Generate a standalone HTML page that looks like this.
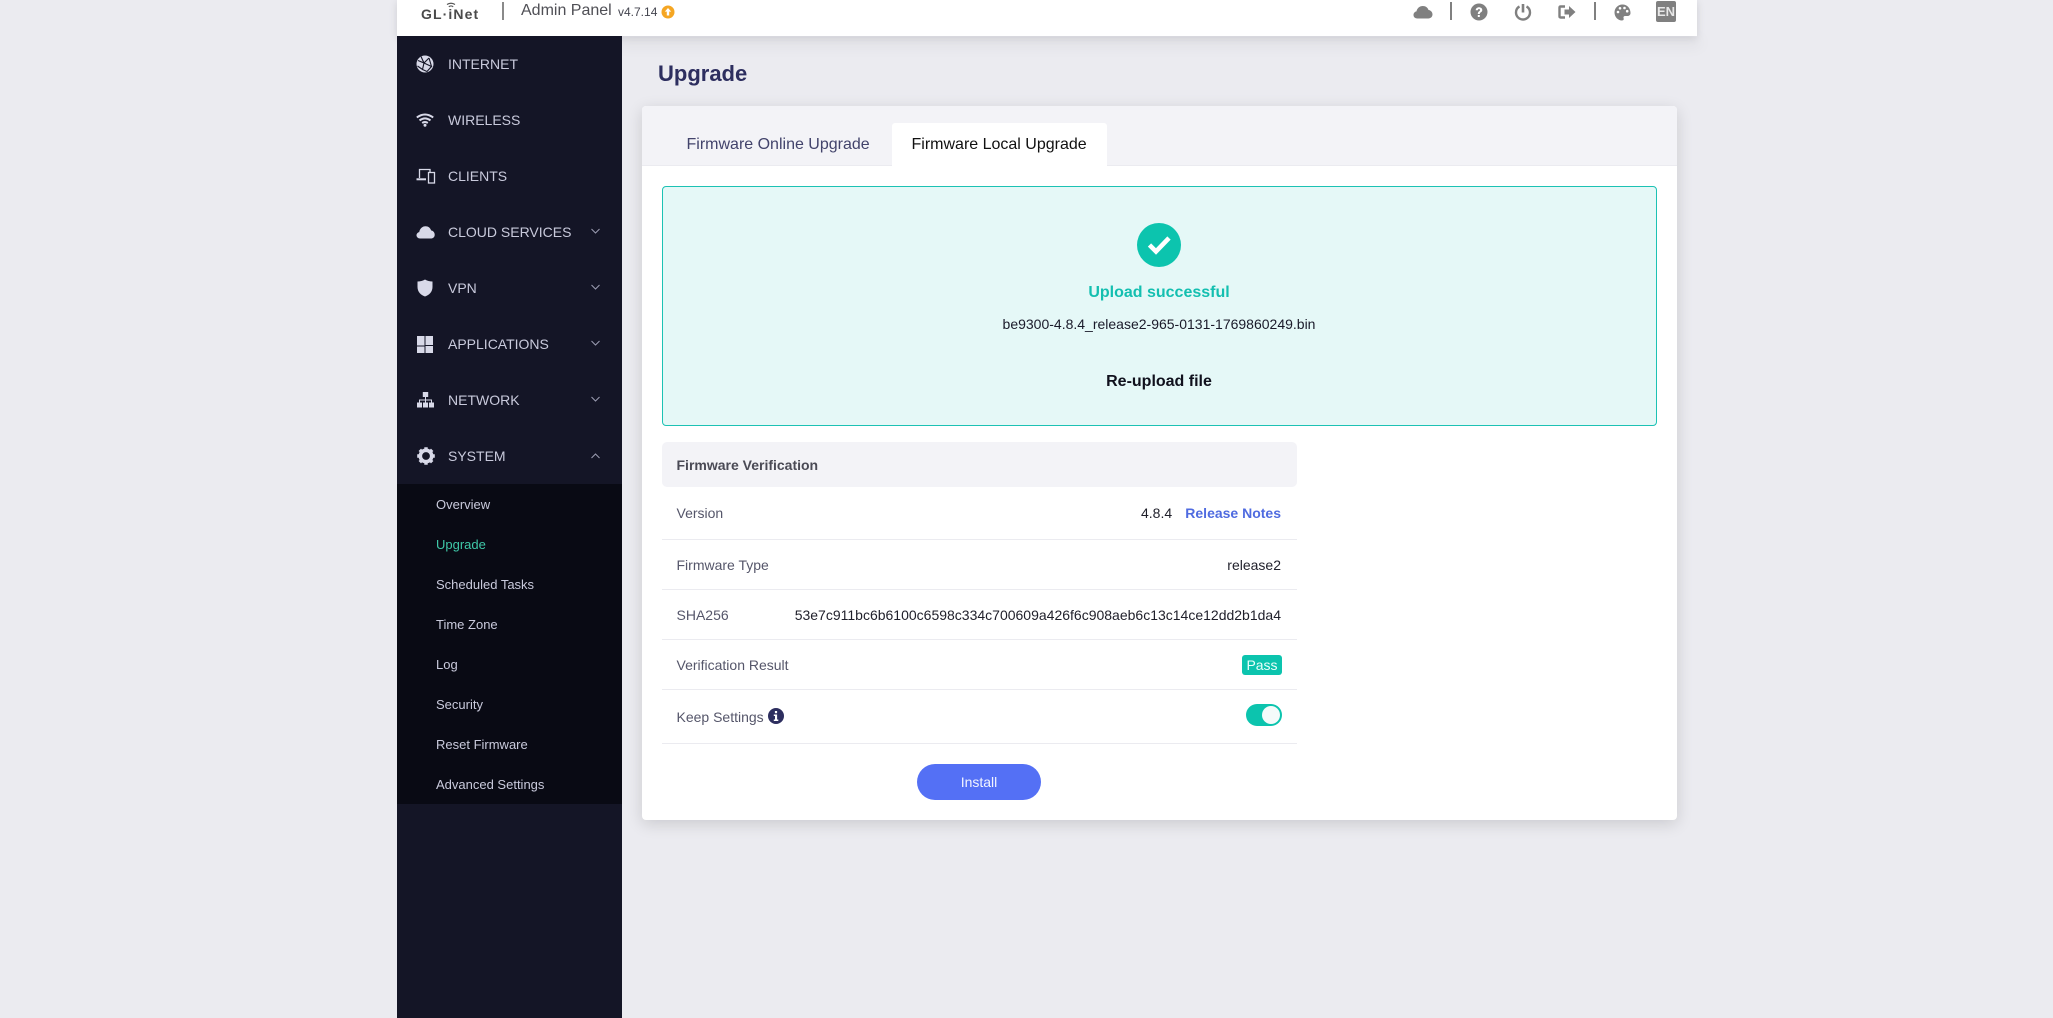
<!DOCTYPE html>
<html lang="en"><head><meta charset="utf-8"><title>Admin Panel</title>
<style>
html,body{margin:0;padding:0;width:2053px;height:1018px;overflow:hidden;background:#ebebf0;font-family:"Liberation Sans",sans-serif}
.a{position:absolute}
.t{position:absolute;line-height:20px;height:20px;white-space:nowrap}
.m{font-size:14px;left:448px;color:#c9cadc}
.s{font-size:13px;left:436px;color:#c9cadc}
.l{font-size:14px;left:676.500px;color:#55566a}
.r{font-size:14px;right:772px;color:#1f1f2a}
.line{position:absolute;left:662px;width:635px;height:1px;background:#ebebf0}
svg{position:absolute;overflow:visible}
</style></head><body>
<div class="a" style="left:622px;top:36px;width:1075px;height:1px;box-shadow:0 6px 14px 4px rgba(0,0,0,.05)"></div>
<div class="a" style="left:397px;top:0;width:1300px;height:36px;background:#fff;box-shadow:0 2px 8px rgba(0,0,0,.12)"></div>

<!-- header left -->
<div class="t" style="left:421px;top:4px;font-size:14px;font-weight:bold;letter-spacing:1.100px;color:#4a4a4a">GL·iNet</div>
<svg style="left:446px;top:2px" width="10" height="7" viewBox="0 0 10 7" fill="none" stroke="#555" stroke-width="1.200"><path d="M1 2.500Q5 0 9 2.500M2.800 4.700Q5 3.200 7.200 4.700"/></svg>
<div class="a" style="left:502px;top:2px;width:2px;height:18px;background:#8a8a8a"></div>
<div class="t" style="left:521px;top:1px;font-size:16px;color:#4f4f55">Admin Panel</div>
<div class="t" style="left:618px;top:2px;font-size:12px;color:#44454f">v4.7.14</div>
<svg style="left:661px;top:5px" width="14" height="14" viewBox="0 0 14 14"><circle cx="7" cy="7" r="6.500" fill="#f5a623"/><path d="M7 3L10.200 6.600H8.200V10.500H5.800V6.600H3.800Z" fill="#fff"/></svg>

<!-- header right -->
<svg style="left:1413px;top:4px" width="20" height="16" viewBox="0 0 20 16"><path d="M4.500 14.500C2 14.500.5 13 .5 11c0-1.900 1.300-3.300 3-3.600C4 4.300 6.600 2 9.800 2c2.900 0 5 1.700 5.700 4 2.400.3 4 2.200 4 4.400 0 2.400-1.800 4.100-4.200 4.100Z" fill="#808080"/></svg>
<div class="a" style="left:1450px;top:2px;width:2px;height:18px;background:#808080"></div>
<svg style="left:1470px;top:3px" width="18" height="18" viewBox="0 0 18 18"><circle cx="9" cy="9" r="8.500" fill="#808080"/><path d="M5.700 7.200C5.700 5.300 7.200 4.200 9 4.200s3.300 1.100 3.300 2.800c0 2.400-2.500 2.100-2.500 4H7.800c0-2.800 2.200-2.800 2.200-3.900 0-.6-.4-1.100-1-1.100s-1.100.5-1.100 1.300Z" fill="#fff"/><rect x="7.800" y="12" width="2" height="2" fill="#fff"/></svg>
<svg style="left:1515px;top:3px" width="16" height="18" viewBox="0 0 16 18" fill="none" stroke="#808080" stroke-width="2.400"><path d="M4.500 3.500C2.300 4.600 1 6.700 1 9.500c0 3.900 3.100 7 7 7s7-3.100 7-7c0-2.800-1.400-4.900-3.500-6"/><path d="M8 1V9.500" stroke-width="2.600"/></svg>
<svg style="left:1558px;top:4px" width="18" height="16" viewBox="0 0 18 16"><path d="M7 2.500H2.700Q1.500 2.500 1.500 3.700V12.300Q1.500 13.500 2.700 13.500H7" fill="none" stroke="#808080" stroke-width="2.400"/><path d="M6.500 5.500H11V2L17.500 8 11 14V10.500H6.500Z" fill="#808080"/></svg>
<div class="a" style="left:1594px;top:2px;width:2px;height:18px;background:#808080"></div>
<svg style="left:1614px;top:4px" width="17" height="17" viewBox="0 0 17 17"><path d="M8.500.5C4 .5.500 4 .500 8.500S4 16.500 8 16.500c1.500 0 2-1 1.600-2.200-.4-1.200.2-2.300 1.500-2.300h2.500c1.700 0 2.900-1.200 2.900-3C16.500 4 13 .5 8.500.5Z" fill="#808080"/><g fill="#fff"><circle cx="4" cy="8" r="1.300"/><circle cx="6" cy="4.300" r="1.300"/><circle cx="10.500" cy="4" r="1.300"/><circle cx="13.200" cy="7.200" r="1.300"/></g></svg>
<div class="a" style="left:1656px;top:1px;width:20px;height:21px;background:#808080;border-radius:2px"></div>
<div class="t" style="left:1656px;top:2px;width:20px;text-align:center;font-size:13px;font-weight:bold;color:#e8e8e8">EN</div>

<!-- sidebar -->
<div class="a" style="left:397px;top:36px;width:225px;height:982px;background:#141526"></div>
<div class="a" style="left:397px;top:484px;width:225px;height:320px;background:#090a14"></div>

<svg style="left:416px;top:55px" width="18" height="18" viewBox="0 0 18 18"><circle cx="9" cy="9" r="8.500" fill="#d8d9e8"/><g fill="none" stroke="#141526" stroke-width="1.100"><path d="M2 5.500L8 8 6.500 14.500 1.500 11M8 8L13 3M8 8L15.500 11.500 11 16.500 6.500 14.500M5 1.500L8 8M13 3L15.500 11.500"/></g></svg>
<svg style="left:416px;top:113px" width="18" height="14" viewBox="0 0 18 14" fill="none" stroke="#d8d9e8" stroke-width="2"><path d="M.8 4.500Q9-1.500 17.200 4.500M3.500 7.400Q9 3.300 14.500 7.400M6.200 10Q9 8 11.800 10"/><circle cx="9" cy="12.300" r="1.500" fill="#d8d9e8" stroke="none"/></svg>
<svg style="left:417px;top:168px" width="19" height="16" viewBox="0 0 19 16" fill="none" stroke="#d8d9e8" stroke-width="1.300"><path d="M2.500 10V1.500H13V4"/><path d="M-.5 11.300H9" stroke-width="2"/><rect x="11.500" y="4.500" width="6" height="10.500"/></svg>
<svg style="left:416px;top:225px" width="19" height="14" viewBox="0 0 19 14"><path d="M4 13.500C2 13.500.5 12 .5 10.300.5 8.700 1.700 7.400 3.200 7.100 3.800 3.600 6.300 1.200 9.500 1.200c2.800 0 4.900 1.700 5.600 4.200 2.200.4 3.600 2.300 3.600 4.300 0 2.300-1.700 3.800-3.900 3.800Z" fill="#d8d9e8"/></svg>
<svg style="left:417px;top:279px" width="16" height="18" viewBox="0 0 16 18"><path d="M8 .5C10 1.800 13 2.500 15.500 2.500V8C15.500 13 12 16.200 8 17.500 4 16.200.5 13 .5 8V2.500C3 2.500 6 1.800 8 .5Z" fill="#d8d9e8"/></svg>
<svg style="left:417px;top:336px" width="16" height="17" viewBox="0 0 16 17" fill="#d8d9e8"><rect x="0" y="0" width="7.500" height="9.500"/><rect x="8.500" y="0" width="7.500" height="9"/><rect x="0" y="10.500" width="7.500" height="6.500"/><rect x="8.500" y="10" width="7.500" height="7"/></svg>
<svg style="left:417px;top:392px" width="17" height="16" viewBox="0 0 17 16" fill="#d8d9e8"><rect x="5.800" y="0" width="5.400" height="5"/><rect x="0" y="10.500" width="5" height="5"/><rect x="6" y="10.500" width="5" height="5"/><rect x="12" y="10.500" width="5" height="5"/><path d="M8 5h1v2.500h6V10.500h-1V8.500H9V10.500H8V8.500H3V10.500H2V7.500h6Z"/></svg>
<svg style="left:416.500px;top:447px" width="18" height="18" viewBox="0 0 18 18"><circle cx="9" cy="9" r="5.700" fill="none" stroke="#d8d9e8" stroke-width="3.600"/><g stroke="#d8d9e8" stroke-width="3.400"><path d="M9 .2V3.500M9 14.500V17.800M.2 9H3.500M14.500 9H17.800M2.800 2.800L5.100 5.100M12.900 12.900L15.200 15.200M15.200 2.800L12.900 5.100M5.100 12.900L2.800 15.200"/></g></svg>

<div class="t m" style="top:54px">INTERNET</div>
<div class="t m" style="top:110px">WIRELESS</div>
<div class="t m" style="top:166px">CLIENTS</div>
<div class="t m" style="top:222px">CLOUD SERVICES</div>
<div class="t m" style="top:278px">VPN</div>
<div class="t m" style="top:334px">APPLICATIONS</div>
<div class="t m" style="top:390px">NETWORK</div>
<div class="t m" style="top:446px">SYSTEM</div>

<svg style="left:591px;top:228px" width="9" height="6" viewBox="0 0 9 6" fill="none" stroke="#9c9db2" stroke-width="1"><path d="M.5 1L4.500 5 8.500 1"/></svg>
<svg style="left:591px;top:284px" width="9" height="6" viewBox="0 0 9 6" fill="none" stroke="#9c9db2" stroke-width="1"><path d="M.5 1L4.500 5 8.500 1"/></svg>
<svg style="left:591px;top:340px" width="9" height="6" viewBox="0 0 9 6" fill="none" stroke="#9c9db2" stroke-width="1"><path d="M.5 1L4.500 5 8.500 1"/></svg>
<svg style="left:591px;top:396px" width="9" height="6" viewBox="0 0 9 6" fill="none" stroke="#9c9db2" stroke-width="1"><path d="M.5 1L4.500 5 8.500 1"/></svg>
<svg style="left:591px;top:453px" width="9" height="6" viewBox="0 0 9 6" fill="none" stroke="#9c9db2" stroke-width="1"><path d="M.5 5L4.500 1 8.500 5"/></svg>

<div class="t s" style="top:495px">Overview</div>
<div class="t s" style="top:535px;color:#3fc8a8">Upgrade</div>
<div class="t s" style="top:575px">Scheduled Tasks</div>
<div class="t s" style="top:615px">Time Zone</div>
<div class="t s" style="top:655px">Log</div>
<div class="t s" style="top:695px">Security</div>
<div class="t s" style="top:735px">Reset Firmware</div>
<div class="t s" style="top:775px">Advanced Settings</div>

<!-- content -->
<div class="t" style="left:658px;top:64px;font-size:22px;font-weight:bold;color:#2d2e5f">Upgrade</div>
<div class="a" style="left:642px;top:106px;width:1035px;height:714px;background:#fff;border-radius:4px;box-shadow:0 4px 16px rgba(0,0,0,.14)"></div>
<div class="a" style="left:642px;top:106px;width:1035px;height:60px;background:#f3f3f7;border-radius:4px 4px 0 0;border-bottom:1px solid #ebebf0;box-sizing:border-box"></div>
<div class="a" style="left:892px;top:123px;width:215px;height:44px;background:#fff;border-radius:3px 3px 0 0"></div>
<div class="t" style="left:686.500px;top:135px;font-size:16px;color:#42436b">Firmware Online Upgrade</div>
<div class="t" style="left:911.500px;top:135px;font-size:16px;color:#111">Firmware Local Upgrade</div>

<div class="a" style="left:662px;top:186px;width:995px;height:240px;box-sizing:border-box;background:#e5f8f7;border:1px solid #1cc2b4;border-radius:4px"></div>
<svg style="left:1137px;top:223px" width="44" height="44" viewBox="0 0 44 44"><circle cx="22" cy="22" r="22" fill="#0cc4ae"/><path d="M12.500 22L19 28.500 32 15" fill="none" stroke="#fff" stroke-width="4.600"/></svg>
<div class="t" style="left:1009px;width:300px;text-align:center;top:283px;font-size:16px;font-weight:bold;color:#14bfb0">Upload successful</div>
<div class="t" style="left:909px;width:500px;text-align:center;top:314px;font-size:14px;color:#1a1a2a">be9300-4.8.4_release2-965-0131-1769860249.bin</div>
<div class="t" style="left:1009px;width:300px;text-align:center;top:372px;font-size:16px;font-weight:bold;color:#10111d">Re-upload file</div>

<div class="a" style="left:662px;top:442px;width:635px;height:45px;background:#f3f3f7;border-radius:5px"></div>
<div class="t" style="left:676.500px;top:455px;font-size:14px;font-weight:bold;color:#4a4a55">Firmware Verification</div>
<div class="line" style="top:539px"></div>
<div class="line" style="top:589px"></div>
<div class="line" style="top:639px"></div>
<div class="line" style="top:689px"></div>
<div class="line" style="top:743px"></div>

<div class="t l" style="top:503px">Version</div>
<div class="t" style="left:1141px;top:503px;font-size:14px;color:#1f1f2a">4.8.4</div>
<div class="t r" style="top:503px;font-weight:bold;color:#4f6be0">Release Notes</div>
<div class="t l" style="top:555px">Firmware Type</div>
<div class="t r" style="top:555px">release2</div>
<div class="t l" style="top:605px">SHA256</div>
<div class="t r" style="top:605px">53e7c911bc6b6100c6598c334c700609a426f6c908aeb6c13c14ce12dd2b1da4</div>
<div class="t l" style="top:655px">Verification Result</div>
<div class="a" style="left:1242px;top:655px;width:40px;height:20px;background:#0cc4ae;border-radius:3px"></div>
<div class="t" style="left:1242px;top:655px;width:40px;text-align:center;font-size:14px;color:#eafffb">Pass</div>
<div class="t l" style="top:707px">Keep Settings</div>
<svg style="left:768px;top:708px" width="16" height="16" viewBox="0 0 16 16"><circle cx="8" cy="8" r="8" fill="#2d2e5f"/><rect x="6.900" y="3" width="2.200" height="2.200" fill="#fff"/><path d="M5.800 6.500H9.100V11.500H10.300V13H5.800V11.500H7V8H5.800Z" fill="#fff"/></svg>
<div class="a" style="left:1246px;top:704px;width:36px;height:22px;background:#0cc4ae;border-radius:11px"></div>
<div class="a" style="left:1262px;top:706px;width:18px;height:18px;background:#f4fbfa;border-radius:50%"></div>

<div class="a" style="left:917px;top:764px;width:124px;height:36px;background:#5470f5;border-radius:18px"></div>
<div class="t" style="left:917px;top:772px;width:124px;text-align:center;font-size:14px;color:#f2f4ff">Install</div>
</body></html>
